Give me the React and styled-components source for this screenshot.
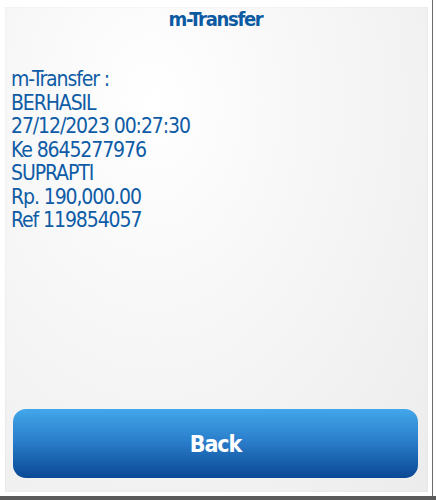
import React from "react";
import styled, { createGlobalStyle } from "styled-components";

const GlobalStyle = createGlobalStyle`
  html, body {
    margin: 0;
    padding: 0;
    background: #ffffff;
  }
  body {
    font-family: "DejaVu Sans Condensed", "DejaVu Sans", sans-serif;
  }
`;

const lines = [
  "m-Transfer :",
  "BERHASIL",
  "27/12/2023 00:27:30",
  "Ke 8645277976",
  "SUPRAPTI",
  "Rp. 190,000.00",
  "Ref 119854057",
];

const App = () => {
  return (
    <>
      <GlobalStyle />
      <Screen>
        <Frame>
          <Panel>
            <Title>m-Transfer</Title>
            <Message>
              {lines.map((line, idx) => (
                <Line key={idx}>{line}</Line>
              ))}
            </Message>
            <BackButton>Back</BackButton>
          </Panel>
        </Frame>
        <BottomBar />
      </Screen>
    </>
  );
};

export default App;

const Screen = styled.div`
  width: 436px;
  height: 500px;
  display: flex;
  flex-direction: column;
  overflow: hidden;
`;

const Frame = styled.div`
  width: 433px;
  height: 496px;
  box-sizing: border-box;
  padding: 7px 4px 4px 5px;
  background: #ffffff;
  border-right: 1px solid #6a6a6a;
`;

const BottomBar = styled.div`
  height: 4px;
  background: #5a5a5a;
`;

const Panel = styled.div`
  height: 100%;
  box-sizing: border-box;
  display: flex;
  flex-direction: column;
  padding: 0 10px 14px 6px;
  background: radial-gradient(
    ellipse at 35% 20%,
    #ffffff 0%,
    #f8f8f8 35%,
    #ececec 100%
  );
  box-shadow: inset 0 0 2px rgba(0, 0, 0, 0.08);
`;

const Title = styled.div`
  text-align: center;
  font-size: 20px;
  font-weight: bold;
  letter-spacing: -1.3px;
  color: #0b5aa2;
  line-height: 24px;
  padding-left: 2px;
`;

const Message = styled.div`
  flex: 1;
  padding-top: 37px;
`;

const Line = styled.div`
  font-size: 21px;
  letter-spacing: -1.1px;
  line-height: 23.5px;
  color: #0f5ca6;
`;

const BackButton = styled.button`
  height: 69px;
  margin-left: 2px;
  border: none;
  border-radius: 13px;
  background: linear-gradient(to bottom, #42a7ea 0%, #2b7fcc 45%, #0a4894 100%);
  color: #ffffff;
  font-family: "DejaVu Sans Condensed", "DejaVu Sans", sans-serif;
  font-size: 23px;
  font-weight: bold;
  letter-spacing: -1px;
  cursor: pointer;
`;
